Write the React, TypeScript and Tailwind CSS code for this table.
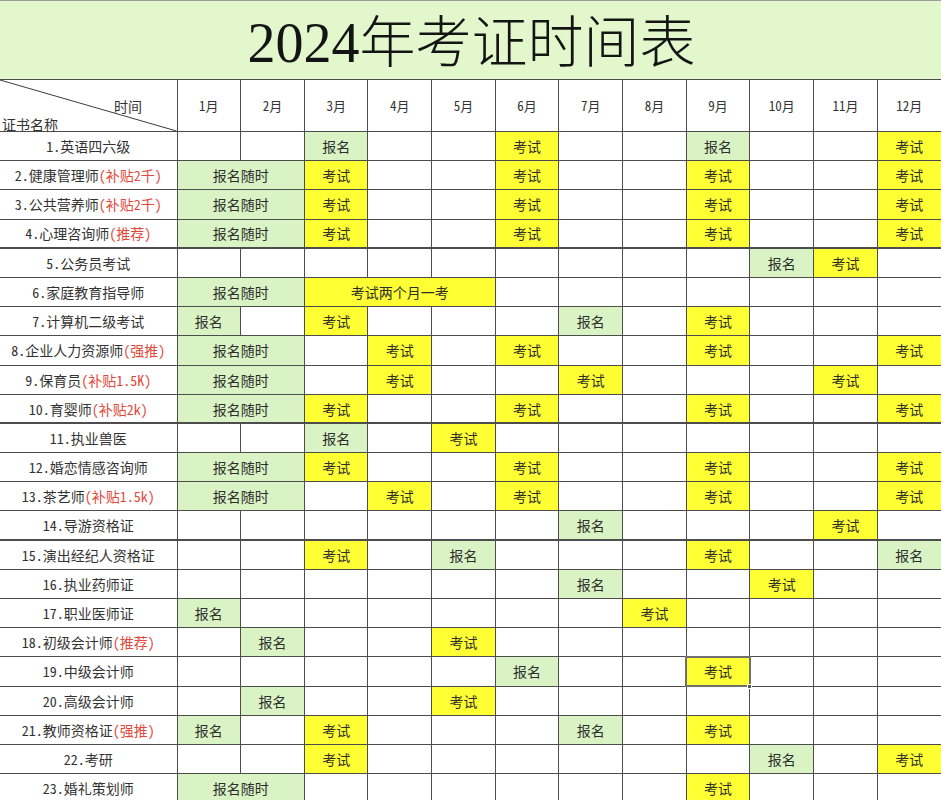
import React from "react";

type Mark = { col: number; span?: number; text: string; kind: "g" | "y" };

interface Row {
  label: string;
  note?: string;
  marks: Mark[];
  thick?: boolean;
  selected?: number;
}

const g = (col: number, text = "报名", span = 1): Mark => ({ col, span, text, kind: "g" });
const y = (col: number, text = "考试", span = 1): Mark => ({ col, span, text, kind: "y" });
const anytime = g(1, "报名随时", 2);

const rows: Row[] = [
  { label: "1.英语四六级", marks: [g(3), y(6), g(9), y(12)] },
  { label: "2.健康管理师", note: "(补贴2千)", marks: [anytime, y(3), y(6), y(9), y(12)] },
  { label: "3.公共营养师", note: "(补贴2千)", marks: [anytime, y(3), y(6), y(9), y(12)] },
  { label: "4.心理咨询师", note: "(推荐)", marks: [anytime, y(3), y(6), y(9), y(12)], thick: true },
  { label: "5.公务员考试", marks: [g(10), y(11)] },
  { label: "6.家庭教育指导师", marks: [anytime, y(3, "考试两个月一考", 3)] },
  { label: "7.计算机二级考试", marks: [g(1), y(3), g(7), y(9)] },
  { label: "8.企业人力资源师", note: "(强推)", marks: [anytime, y(4), y(6), y(9), y(12)] },
  { label: "9.保育员", note: "(补贴1.5K)", marks: [anytime, y(4), y(7), y(11)] },
  { label: "10.育婴师", note: "(补贴2k)", marks: [anytime, y(3), y(6), y(9), y(12)], thick: true },
  { label: "11.执业兽医", marks: [g(3), y(5)] },
  { label: "12.婚恋情感咨询师", marks: [anytime, y(3), y(6), y(9), y(12)] },
  { label: "13.茶艺师", note: "(补贴1.5k)", marks: [anytime, y(4), y(6), y(9), y(12)] },
  { label: "14.导游资格证", marks: [g(7), y(11)], thick: true },
  { label: "15.演出经纪人资格证", marks: [y(3), g(5), y(9), g(12)] },
  { label: "16.执业药师证", marks: [g(7), y(10)] },
  { label: "17.职业医师证", marks: [g(1), y(8)] },
  { label: "18.初级会计师", note: "(推荐)", marks: [g(2), y(5)] },
  { label: "19.中级会计师", marks: [g(6), y(9)], selected: 9 },
  { label: "20.高级会计师", marks: [g(2), y(5)] },
  { label: "21.教师资格证", note: "(强推)", marks: [g(1), y(3), g(7), y(9)] },
  { label: "22.考研", marks: [y(3), g(10), y(12)] },
  { label: "23.婚礼策划师", marks: [anytime, y(9)] },
];

const months = Array.from({ length: 12 }, (_, i) => i + 1);

const cellBase = "border border-[#4d4d4d] h-[29.2px] p-0 text-center align-middle text-[14px] leading-none text-[#2e2e2e]";

function ScheduleRow({ row }: { row: Row }) {
  const bottom = row.thick ? "border-b-2" : "";
  const cells: React.ReactNode[] = [];
  let m = 1;
  while (m <= 12) {
    const mark = row.marks.find((k) => k.col === m);
    if (mark) {
      const span = mark.span ?? 1;
      const bg = mark.kind === "g" ? "bg-[#d9f3c5]" : "bg-[#ffff33]";
      const isSel = row.selected === m;
      cells.push(
        <td
          key={m}
          colSpan={span}
          className={`${cellBase} ${bottom} ${bg} ${m + span - 1 === 12 ? "border-r-0" : ""} ${isSel ? "relative outline-2 outline-[#707070] -outline-offset-1" : ""}`}
        >
          {mark.text}
          {isSel && (
            <span className="absolute -right-[3px] -bottom-[3px] h-[5px] w-[5px] border border-white bg-[#5a5a5a]" />
          )}
        </td>
      );
      m += span;
    } else {
      cells.push(
        <td key={m} className={`${cellBase} ${bottom} bg-white ${m === 12 ? "border-r-0" : ""}`} />
      );
      m += 1;
    }
  }
  return (
    <tr>
      <td className={`${cellBase} ${bottom} border-l-0 bg-white whitespace-nowrap text-[#333]`}>
        {row.label}
        {row.note && <span className="text-[#e2493b]">{row.note}</span>}
      </td>
      {cells}
    </tr>
  );
}

export default function App() {
  return (
    <div className="w-[941px] h-[800px] overflow-hidden bg-white font-['Noto_Sans_CJK_SC',sans-serif] [font-feature-settings:'hwid']">
      <div className="flex h-[79px] items-center justify-center border-t border-[#9c9c9c] bg-[#e2f7cb]">
        <h1 className="mt-[6px] pl-[2px] font-['Liberation_Serif','Noto_Sans_CJK_SC',serif] text-[56px] font-light leading-none text-[#141414] [font-feature-settings:normal]">
          2024年考证时间表
        </h1>
      </div>
      <table className="w-[941px] table-fixed border-collapse">
        <colgroup>
          <col className="w-[177px]" />
          {months.map((n) => (
            <col key={n} />
          ))}
        </colgroup>
        <thead>
          <tr>
            <th className="relative h-[52px] border border-l-0 border-[#4d4d4d] bg-white p-0 font-normal">
              <svg className="absolute inset-0 h-full w-full" viewBox="0 0 177 52" preserveAspectRatio="none">
                <line x1="0" y1="0" x2="177" y2="52" stroke="#3a3a3a" strokeWidth="1" />
              </svg>
              <span className="absolute left-[114px] top-[19px] text-[14px] leading-none text-[#333]">时间</span>
              <span className="absolute left-[2px] top-[37px] text-[14px] leading-none text-[#333]">证书名称</span>
            </th>
            {months.map((n) => (
              <th
                key={n}
                className={`h-[52px] border border-[#4d4d4d] bg-white p-0 text-center text-[13px] font-normal leading-none text-[#333] ${n === 12 ? "border-r-0" : ""}`}
              >
                {n}月
              </th>
            ))}
          </tr>
        </thead>
        <tbody>
          {rows.map((r) => (
            <ScheduleRow key={r.label} row={r} />
          ))}
        </tbody>
      </table>
    </div>
  );
}
